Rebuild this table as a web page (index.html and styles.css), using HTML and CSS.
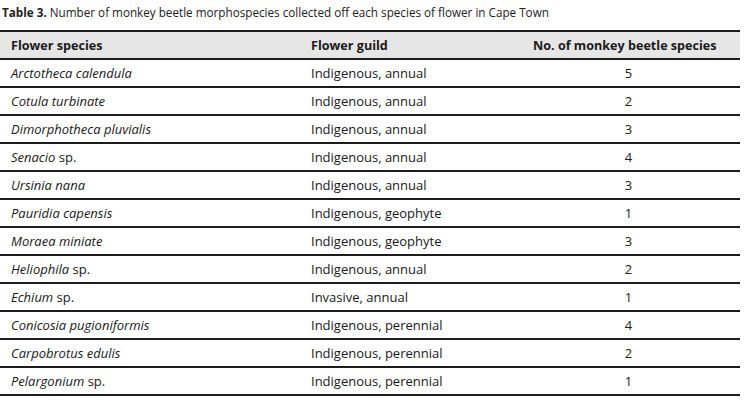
FILE: index.html
```html
<!DOCTYPE html>
<html lang="en">
<head>
<meta charset="utf-8">
<title>Table 3</title>
<link rel="stylesheet" href="styles.css">
</head>
<body>
<p class="caption"><b>Table 3.</b> Number of monkey beetle morphospecies collected off each species of flower in Cape Town</p>
<table class="data">
  <thead>
    <tr><th class="c1">Flower species</th><th class="c2">Flower guild</th><th class="c3">No. of monkey beetle species</th></tr>
  </thead>
  <tbody>
    <tr><td class="c1"><i>Arctotheca calendula</i></td><td class="c2">Indigenous, annual</td><td class="c3">5</td></tr>
    <tr><td class="c1"><i>Cotula turbinate</i></td><td class="c2">Indigenous, annual</td><td class="c3">2</td></tr>
    <tr><td class="c1"><i>Dimorphotheca pluvialis</i></td><td class="c2">Indigenous, annual</td><td class="c3">3</td></tr>
    <tr><td class="c1"><i>Senacio</i> sp.</td><td class="c2">Indigenous, annual</td><td class="c3">4</td></tr>
    <tr><td class="c1"><i>Ursinia nana</i></td><td class="c2">Indigenous, annual</td><td class="c3">3</td></tr>
    <tr><td class="c1"><i>Pauridia capensis</i></td><td class="c2">Indigenous, geophyte</td><td class="c3">1</td></tr>
    <tr><td class="c1"><i>Moraea miniate</i></td><td class="c2">Indigenous, geophyte</td><td class="c3">3</td></tr>
    <tr><td class="c1"><i>Heliophila</i> sp.</td><td class="c2">Indigenous, annual</td><td class="c3">2</td></tr>
    <tr><td class="c1"><i>Echium</i> sp.</td><td class="c2">Invasive, annual</td><td class="c3">1</td></tr>
    <tr><td class="c1"><i>Conicosia pugioniformis</i></td><td class="c2">Indigenous, perennial</td><td class="c3">4</td></tr>
    <tr><td class="c1"><i>Carpobrotus edulis</i></td><td class="c2">Indigenous, perennial</td><td class="c3">2</td></tr>
    <tr><td class="c1"><i>Pelargonium</i> sp.</td><td class="c2">Indigenous, perennial</td><td class="c3">1</td></tr>
  </tbody>
</table>
</body>
</html>
```
FILE: styles.css
```css
html, body {
  margin: 0;
  padding: 0;
  background: #ffffff;
}
body {
  font-family: "Open Sans", "DejaVu Sans", sans-serif;
  color: #1a1a1a;
}
.caption {
  margin: 0;
  padding: 4px 0 0 2px;
  height: 30px;
  box-sizing: border-box;
  font-size: 11.7px;
  line-height: 16px;
  color: #222;
}
.caption b {
  font-weight: 700;
}
.data {
  width: 740px;
  border-collapse: collapse;
  table-layout: fixed;
  font-size: 13px;
}
.data th,
.data td {
  padding: 0;
  text-align: left;
  vertical-align: middle;
  border-bottom: 2px solid #1c1c1c;
}
.data thead tr {
  background: #e6e6e6;
  border-top: 2px solid #1c1c1c;
}
.data th {
  height: 26px;
  font-weight: 700;
  font-size: 12.6px;
}
.data td {
  height: 26px;
}
.data th.c3 {
  text-align: left !important;
  padding-left: 12px;
}
.data td.c3 {
  padding-right: 4px;
}
.c1 {
  width: 300px;
  padding-left: 11px !important;
}
.c2 {
  width: 210px;
}
.c3 {
  text-align: center !important;
}
```
